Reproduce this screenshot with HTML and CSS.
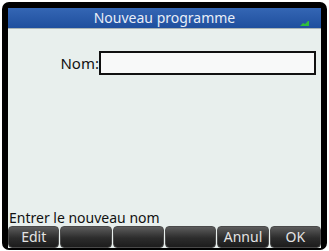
FILE: index.html
```html
<!DOCTYPE html>
<html lang="fr">
<head>
    <meta charset="UTF-8">
    <title>Nouveau programme</title>
    <link rel="stylesheet" href="styles.css">
</head>
<body>
    <div class="frame">
        <div class="screen">
            <div class="header">
                <span class="title">Nouveau programme</span>
                <svg class="status-icon" width="9" height="6" viewBox="0 0 9 6">
                    <path d="M0 6 L3 3 L5 4 L8 1 L9 1 L9 6 Z" fill="#2fbf3a"/>
                </svg>
            </div>

            <div class="content">
                <div class="field">
                    <label for="nom">Nom:</label>
                    <div class="input" id="nom"></div>
                </div>
            </div>

            <div class="status">Entrer le nouveau nom</div>

            <div class="softkeys">
                <div class="key">Edit</div>
                <div class="key"></div>
                <div class="key"></div>
                <div class="key"></div>
                <div class="key">Annul</div>
                <div class="key">OK</div>
            </div>
        </div>
    </div>
</body>
</html>
```

FILE: styles.css
```css
* {
    margin: 0;
    padding: 0;
    box-sizing: border-box;
}

body {
    font-family: "Noto Sans", "Open Sans", sans-serif;
    background: white;
    width: 329px;
    height: 251px;
    overflow: hidden;
    padding: 2px;
}

.frame {
    width: 325px;
    height: 248px;
    background: #000;
    border-radius: 7px;
    padding: 6px 6px 2px 6px;
}

.screen {
    height: 100%;
    background: #e8efed;
    display: flex;
    flex-direction: column;
}

.header {
    height: 21px;
    background: linear-gradient(#3466b4, #1f4f9e);
    border-bottom: 1px solid #a9b3b6;
    position: relative;
    display: flex;
    align-items: center;
    justify-content: center;
}

.title {
    color: #e8eef8;
    font-size: 14px;
    line-height: 20px;
}

.status-icon {
    position: absolute;
    right: 12px;
    top: 12px;
}

.content {
    flex: 1;
    padding-top: 22px;
}

.field {
    display: flex;
    align-items: center;
}

label {
    width: 91px;
    text-align: right;
    font-size: 15px;
    color: #111;
}

.input {
    width: 217px;
    height: 24px;
    background: #f8f9f9;
    border: 2px solid #111;
}

.status {
    font-size: 14px;
    line-height: 17px;
    color: #111;
    padding-left: 1px;
}

.softkeys {
    height: 22px;
    display: grid;
    grid-template-columns: repeat(6, 1fr);
    gap: 1px;
    background: #e8efed;
}

.key {
    background: linear-gradient(#5c5c5c, #2c2c2c 55%, #1c1c1c);
    border: 1px solid #4a4a4a;
    border-radius: 4px;
    color: #e4e4e4;
    font-size: 14px;
    line-height: 20px;
    text-align: center;
}
```
